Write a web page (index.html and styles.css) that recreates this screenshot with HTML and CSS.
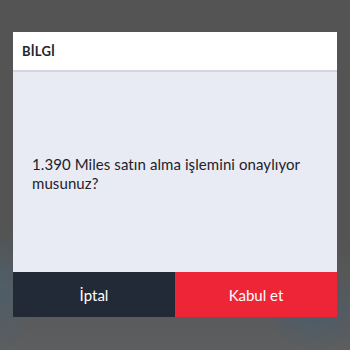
FILE: index.html
```html
<!DOCTYPE html>
<html lang="tr">
<head>
<meta charset="utf-8">
<link rel="stylesheet" href="styles.css">
</head>
<body>
<div class="screen">
  <div class="dialog">
    <div class="dialog-header">BİLGİ</div>
    <div class="dialog-body">
      <p class="message">1.390 Miles satın alma işlemini onaylıyor musunuz?</p>
    </div>
    <div class="dialog-actions">
      <button class="btn btn-cancel">İptal</button>
      <button class="btn btn-accept">Kabul et</button>
    </div>
  </div>
</div>
</body>
</html>
```
FILE: styles.css
```css
html, body {
  margin: 0;
  padding: 0;
}
body {
  width: 350px;
  height: 350px;
  overflow: hidden;
  font-family: Lato, "Open Sans", "DejaVu Sans", sans-serif;
  background:
    radial-gradient(ellipse 40px 60px at 0px 290px, rgba(70, 100, 120, 0.5), rgba(70, 100, 120, 0) 100%),
    radial-gradient(ellipse 50px 40px at 315px 310px, rgba(60, 95, 120, 0.5), rgba(60, 95, 120, 0) 100%),
    linear-gradient(#545454 0px, #545454 240px, #5c5e60 350px);
}
.screen {
  padding: 32px 13px 0 13px;
}
.dialog {
  width: 324px;
  display: flex;
  flex-direction: column;
}
.dialog-header {
  height: 38px;
  background: #ffffff;
  border-bottom: 2px solid #d3d6dc;
  display: flex;
  align-items: center;
  padding-left: 9px;
  font-size: 13px;
  font-weight: 700;
  color: #1e2530;
  letter-spacing: 0.2px;
}
.dialog-body {
  height: 200px;
  background: #e8ebf3;
  display: flex;
  align-items: center;
  padding: 0 19px;
  box-sizing: border-box;
}
.message {
  margin: 4px 0 0 0;
  font-size: 15px;
  line-height: 19px;
  letter-spacing: 0.08px;
  color: #1c222c;
}
.dialog-actions {
  display: grid;
  grid-template-columns: 162px 162px;
  height: 45px;
}
.btn {
  border: 0;
  margin: 0;
  padding: 0;
  font-family: inherit;
  font-size: 15px;
  color: #ffffff;
}
.btn-cancel {
  background: #232a37;
}
.btn-accept {
  background: #ee2536;
}
```
